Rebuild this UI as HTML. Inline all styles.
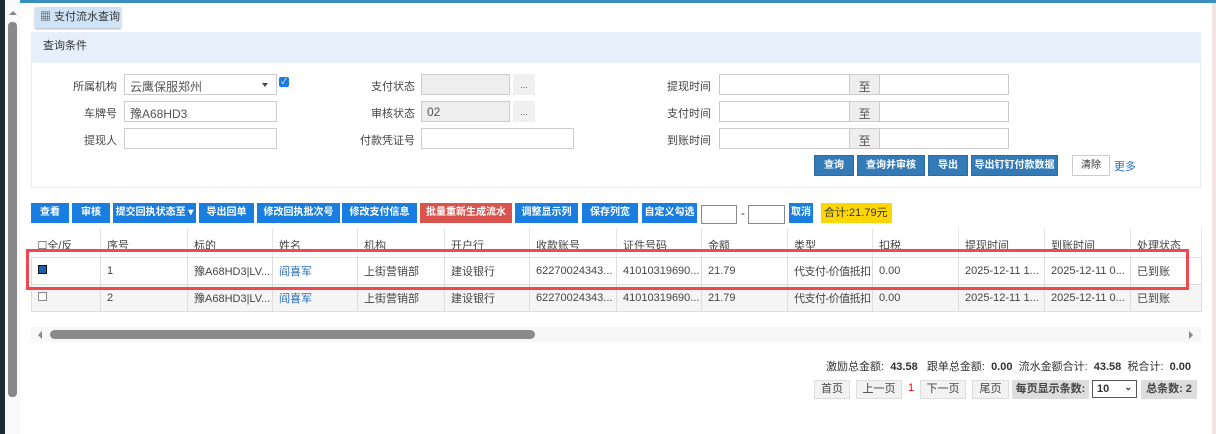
<!DOCTYPE html>
<html><head><meta charset="utf-8"><style>
*{box-sizing:border-box;margin:0;padding:0}
body{width:1216px;height:434px;overflow:hidden;background:#fff;font-family:"Liberation Sans","Noto Sans CJK SC",sans-serif;font-size:12px;color:#333;position:relative}
.a{position:absolute;white-space:nowrap}
.lbl{position:absolute;text-align:right;font-size:11px;color:#444}
.inp{position:absolute;border:1px solid #ccc;background:#fff;height:21px;font-size:12px;padding:3px 5px;color:#555;white-space:nowrap}
.btn{position:absolute;color:#fff;font-size:10px;text-align:center;line-height:20px;height:20px;font-weight:bold;white-space:nowrap;overflow:hidden}
.b1{background:#1a7ee0}
.b2{background:#337ab7;border:1px solid #2e6da4}
.pg{position:absolute;top:380px;height:19px;border:1px solid #ddd;background:#f2f2f2;font-size:11px;text-align:center;line-height:17px;color:#444;white-space:nowrap}
table{border-collapse:collapse;table-layout:fixed;position:absolute;left:31px;top:228px;width:1170px}
td{border:1px solid #ddd;padding:0 6px;font-size:11px;white-space:nowrap;overflow:hidden;color:#444}
tr.h td{height:29px;padding-top:5px;border-top:none;border-left:none;border-right:1px solid #e5e5e5}
tr.r td{height:27px}
tr.r2 td{background:#f5f5f5}
.lk{color:#2a6ebb}
</style></head><body>
<div class="a" style="left:0;top:0;width:5px;height:434px;background:#1f2b32"></div>
<div class="a" style="left:5px;top:0;width:15px;height:434px;background:#fafafa"></div>
<div class="a" style="left:8px;top:22px;width:9px;height:375px;background:#888;border-radius:4px"></div>
<div class="a" style="left:9px;top:11px;width:0;height:0;border-left:4px solid transparent;border-right:4px solid transparent;border-bottom:4px solid #888"></div>
<div class="a" style="left:20px;top:0;width:1196px;height:3px;background:#3a8fbf"></div>
<div class="a" style="left:1212px;top:3px;width:4px;height:431px;background:#f2e4e4"></div>

<div class="a" style="left:35px;top:7px;width:86px;height:21px;background:#cfe3f7;box-shadow:0 1px 2px #aab;font-size:11px;line-height:21px;padding-left:5px">&#9638; 支付流水查询</div>

<div class="a" style="left:31px;top:32px;width:1170px;height:156px;border:1px solid #e3ecf5;background:#fff"></div>
<div class="a" style="left:31px;top:32px;width:1170px;height:31px;background:#e6f0fa;font-size:11px;line-height:29px;padding-left:12px">查询条件</div>

<div class="lbl" style="left:40px;top:78px;width:77px">所属机构</div>
<div class="inp" style="left:124px;top:74px;width:153px">云鹰保服郑州<span style="position:absolute;right:8px;top:8px;border-left:3px solid transparent;border-right:3px solid transparent;border-top:4px solid #444"></span></div>
<div class="a" style="left:279px;top:77px;width:10px;height:10px;background:#1a7ee0;border-radius:2px;color:#fff;font-size:8px;line-height:10px;text-align:center">✓</div>
<div class="lbl" style="left:40px;top:105px;width:77px">车牌号</div>
<div class="inp" style="left:124px;top:101px;width:153px">豫A68HD3</div>
<div class="lbl" style="left:40px;top:132px;width:77px">提现人</div>
<div class="inp" style="left:124px;top:128px;width:153px"></div>

<div class="lbl" style="left:330px;top:78px;width:85px">支付状态</div>
<div class="inp" style="left:421px;top:74px;width:89px;background:#eee"></div>
<div class="inp" style="left:513px;top:74px;width:22px;background:#f0f0f0;border-color:#eee;font-size:9px;text-align:center;padding:5px 0">...</div>
<div class="lbl" style="left:330px;top:105px;width:85px">审核状态</div>
<div class="inp" style="left:421px;top:101px;width:89px;background:#eee">02</div>
<div class="inp" style="left:513px;top:101px;width:22px;background:#f0f0f0;border-color:#eee;font-size:9px;text-align:center;padding:5px 0">...</div>
<div class="lbl" style="left:330px;top:132px;width:85px">付款凭证号</div>
<div class="inp" style="left:421px;top:128px;width:153px"></div>

<div class="lbl" style="left:630px;top:78px;width:81px">提现时间</div>
<div class="inp" style="left:719px;top:74px;width:131px"></div>
<div class="inp" style="left:849px;top:74px;width:31px;background:#eee;text-align:center;padding:3px 0">至</div>
<div class="inp" style="left:879px;top:74px;width:130px"></div>
<div class="lbl" style="left:630px;top:105px;width:81px">支付时间</div>
<div class="inp" style="left:719px;top:101px;width:131px"></div>
<div class="inp" style="left:849px;top:101px;width:31px;background:#eee;text-align:center;padding:3px 0">至</div>
<div class="inp" style="left:879px;top:101px;width:130px"></div>
<div class="lbl" style="left:630px;top:132px;width:81px">到账时间</div>
<div class="inp" style="left:719px;top:128px;width:131px"></div>
<div class="inp" style="left:849px;top:128px;width:31px;background:#eee;text-align:center;padding:3px 0">至</div>
<div class="inp" style="left:879px;top:128px;width:130px"></div>

<div class="btn b2" style="left:814px;top:155px;width:40px;height:21px">查询</div>
<div class="btn b2" style="left:857px;top:155px;width:68px;height:21px">查询并审核</div>
<div class="btn b2" style="left:928px;top:155px;width:40px;height:21px">导出</div>
<div class="btn b2" style="left:971px;top:155px;width:87px;height:21px">导出钉钉付款数据</div>
<div class="btn" style="left:1072px;top:155px;width:38px;height:21px;border:1px solid #ccc;color:#333;font-weight:normal;background:#fff">清除</div>
<div class="a" style="left:1114px;top:158px;font-size:11px;color:#2a6ebb">更多</div>

<div class="btn b1" style="left:31px;top:203px;width:38px">查看</div>
<div class="btn b1" style="left:72px;top:203px;width:38px">审核</div>
<div class="btn b1" style="left:113px;top:203px;width:83px">提交回执状态至 ▾</div>
<div class="btn b1" style="left:199px;top:203px;width:55px">导出回单</div>
<div class="btn b1" style="left:257px;top:203px;width:83px">修改回执批次号</div>
<div class="btn b1" style="left:342px;top:203px;width:75px">修改支付信息</div>
<div class="btn" style="left:420px;top:203px;width:92px;background:#d9534f">批量重新生成流水</div>
<div class="btn b1" style="left:515px;top:203px;width:63px">调整显示列</div>
<div class="btn b1" style="left:582px;top:203px;width:56px">保存列宽</div>
<div class="btn b1" style="left:642px;top:203px;width:55px">自定义勾选</div>
<div class="a" style="left:701px;top:205px;width:36px;height:19px;border:1px solid #888"></div>
<div class="a" style="left:741px;top:206px">-</div>
<div class="a" style="left:748px;top:205px;width:37px;height:19px;border:1px solid #888"></div>
<div class="btn b1" style="left:789px;top:203px;width:24px">取消</div>
<div class="a" style="left:821px;top:203px;width:71px;height:20px;background:#ffd700;font-size:11px;line-height:20px;padding-left:3px;overflow:hidden">合计:21.79元</div>

<table>
<colgroup><col style="width:69px"><col style="width:87px"><col style="width:85px"><col style="width:85px"><col style="width:87px"><col style="width:85px"><col style="width:87px"><col style="width:85px"><col style="width:86px"><col style="width:85px"><col style="width:86px"><col style="width:86px"><col style="width:86px"><col style="width:71px"></colgroup>
<tr class="h"><td>☐全/反</td><td>序号</td><td>标的</td><td>姓名</td><td>机构</td><td>开户行</td><td>收款账号</td><td>证件号码</td><td>金额</td><td>类型</td><td>扣税</td><td>提现时间</td><td>到账时间</td><td>处理状态</td></tr>
<tr class="r"><td><span style="display:inline-block;width:9px;height:9px;background:#1a5fb0;border:1px solid #111"></span></td><td>1</td><td>豫A68HD3|LV...</td><td class="lk">阎喜军</td><td>上街营销部</td><td>建设银行</td><td>62270024343...</td><td>41010319690...</td><td>21.79</td><td style="letter-spacing:-0.5px">代支付-价值抵扣</td><td>0.00</td><td>2025-12-11 1...</td><td>2025-12-11 0...</td><td>已到账</td></tr>
<tr class="r r2"><td><span style="display:inline-block;width:9px;height:9px;border:1px solid #888;background:#fff"></span></td><td>2</td><td>豫A68HD3|LV...</td><td class="lk">阎喜军</td><td>上街营销部</td><td>建设银行</td><td>62270024343...</td><td>41010319690...</td><td>21.79</td><td style="letter-spacing:-0.5px">代支付-价值抵扣</td><td>0.00</td><td>2025-12-11 1...</td><td>2025-12-11 0...</td><td>已到账</td></tr>
</table>
<div class="a" style="left:26px;top:249px;width:1163px;height:41px;border:3px solid #f0484c"></div>

<div class="a" style="left:31px;top:327px;width:1170px;height:15px;background:#f7f7f7"></div>
<div class="a" style="left:50px;top:330px;width:485px;height:9px;background:#8a8a8a;border-radius:5px"></div>
<div class="a" style="left:38px;top:331px;border-top:4px solid transparent;border-bottom:4px solid transparent;border-right:4px solid #888"></div>
<div class="a" style="left:1189px;top:331px;border-top:4px solid transparent;border-bottom:4px solid transparent;border-left:4px solid #888"></div>

<div class="a" style="left:760px;top:358px;width:431px;text-align:right;font-size:11px;white-space:nowrap">激励总金额: &nbsp;<b>43.58</b> &nbsp; 跟单总金额: &nbsp;<b>0.00</b> &nbsp;流水金额合计: &nbsp;<b>43.58</b> &nbsp;税合计: &nbsp;<b>0.00</b></div>

<div class="pg" style="left:814px;width:36px">首页</div>
<div class="pg" style="left:856px;width:46px">上一页</div>
<div class="a" style="left:908px;top:382px;color:#e00;font-size:11px">1</div>
<div class="pg" style="left:920px;width:46px">下一页</div>
<div class="pg" style="left:972px;width:37px">尾页</div>
<div class="pg" style="left:1012px;width:77px;background:#ddd;font-weight:bold;border-color:#ddd">每页显示条数:</div>
<div class="a" style="left:1092px;top:380px;width:45px;height:18px;border:1px solid #555;font-size:11px;font-weight:bold;padding:2px 4px">10<span style="position:absolute;right:4px;top:1px;font-size:9px">&#8964;</span></div>
<div class="pg" style="left:1141px;width:56px;background:#ddd;font-weight:bold;border-color:#ddd">总条数: 2</div>
</body></html>
